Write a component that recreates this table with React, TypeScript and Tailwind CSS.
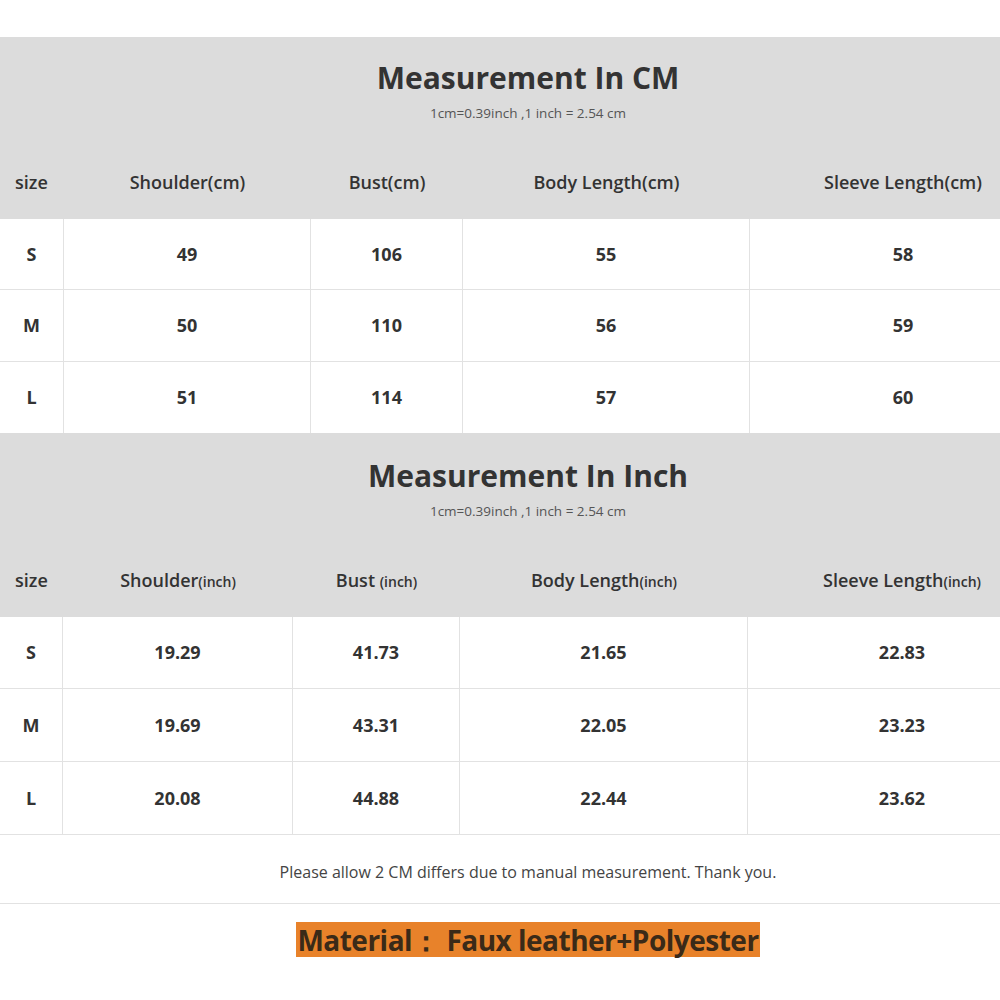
import React from 'react';

const font = { fontFamily: '"Open Sans", "Liberation Sans", sans-serif' };

type Row = { size: string; values: string[] };

const cmRows: Row[] = [
  { size: 'S', values: ['49', '106', '55', '58'] },
  { size: 'M', values: ['50', '110', '56', '59'] },
  { size: 'L', values: ['51', '114', '57', '60'] },
];

const inchRows: Row[] = [
  { size: 'S', values: ['19.29', '41.73', '21.65', '22.83'] },
  { size: 'M', values: ['19.69', '43.31', '22.05', '23.23'] },
  { size: 'L', values: ['20.08', '44.88', '22.44', '23.62'] },
];

const SizeTable: React.FC<{
  title: string;
  titlePad: string;
  titleHeight: string;
  cols: string;
  headers: React.ReactNode[];
  rows: Row[];
  rowHeights: string[];
}> = ({ title, titlePad, titleHeight, cols, headers, rows, rowHeights }) => (
  <div>
    {/* gray header block */}
    <div className="bg-[#dcdcdc]">
      <div className={`flex flex-col items-center ${titlePad} ${titleHeight}`}>
        <div className="text-[30px] leading-[36px] font-bold text-[#333]">{title}</div>
        <div className="mt-[9px] text-[13.5px] leading-[16px] text-[#555]">
          1cm=0.39inch ,1 inch = 2.54 cm
        </div>
      </div>
      <div className={`grid ${cols} h-[74px] items-center text-[18px] font-semibold text-[#333]`}>
        {headers.map((h, i) => (
          <div key={i} className={i === 0 ? 'pl-[15px]' : 'text-center'}>
            {h}
          </div>
        ))}
      </div>
    </div>
    {/* rows */}
    {rows.map((r, ri) => (
      <div
        key={r.size}
        className={`grid ${cols} ${rowHeights[ri]} border-b border-[#e2e2e2] text-[18px] font-bold text-[#333]`}
      >
        <div className="flex items-center justify-center border-r border-[#e2e2e2]">{r.size}</div>
        {r.values.map((v, vi) => (
          <div
            key={vi}
            className={`flex items-center justify-center ${vi < 3 ? 'border-r border-[#e2e2e2]' : ''}`}
          >
            {v}
          </div>
        ))}
      </div>
    ))}
  </div>
);

const Small: React.FC<{ children: React.ReactNode }> = ({ children }) => (
  <span className="text-[14px]">{children}</span>
);

export default function App() {
  return (
    <div className="w-[1000px] h-[1000px] overflow-hidden bg-white" style={font}>
      <div className="w-[1056px]">
        <div className="h-[37px]" />
        <SizeTable
          title="Measurement In CM"
          titlePad="pt-[23px]"
          titleHeight="h-[108px]"
          cols="grid-cols-[64px_247px_152px_287px_1fr]"
          headers={['size', 'Shoulder(cm)', 'Bust(cm)', 'Body Length(cm)', 'Sleeve Length(cm)']}
          rows={cmRows}
          rowHeights={['h-[71px]', 'h-[72px]', 'h-[72px]']}
        />
        <div className="-mt-px">
          <SizeTable
            title="Measurement In Inch"
            titlePad="pt-[25px]"
            titleHeight="h-[110px]"
            cols="grid-cols-[63px_230px_167px_288px_1fr]"
            headers={[
              'size',
              <>Shoulder<Small>(inch)</Small></>,
              <>Bust <Small>(inch)</Small></>,
              <>Body Length<Small>(inch)</Small></>,
              <>Sleeve Length<Small>(inch)</Small></>,
            ]}
            rows={inchRows}
            rowHeights={['h-[72px]', 'h-[73px]', 'h-[73px]']}
          />
        </div>
        {/* note */}
        <div className="h-[69px] border-b border-[#e2e2e2] flex items-center justify-center pt-[6px] text-[16px] text-[#444]">
          Please allow 2 CM differs due to manual measurement. Thank you.
        </div>
        {/* material */}
        <div className="flex justify-center pt-[18px]">
          <div className="bg-[#e8822a] h-[35px] px-[1px] flex items-center text-[28px] font-bold text-[#3a2a18] tracking-[-0.5px]">
            Material： Faux leather+Polyester
          </div>
        </div>
      </div>
    </div>
  );
}
